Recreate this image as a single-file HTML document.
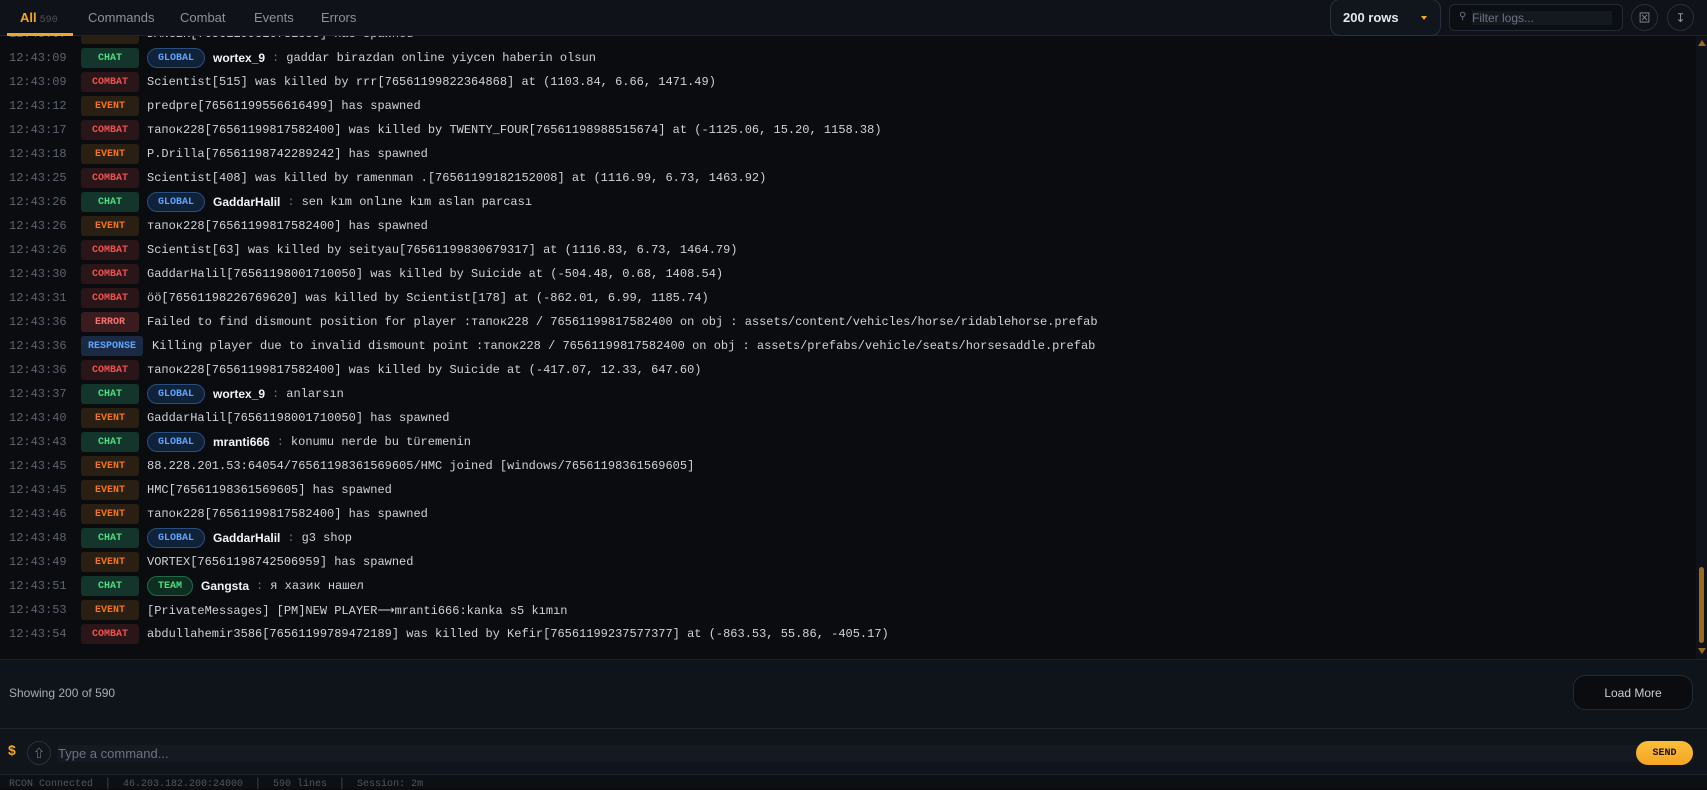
<!DOCTYPE html>
<html><head><meta charset="utf-8"><style>
*{box-sizing:border-box;margin:0;padding:0}
body{width:1707px;height:788px;overflow:hidden;background:#0a0c10;font-family:"Liberation Sans","Noto Sans CJK JP",sans-serif;color:#d1d5db;position:relative}
.tabs{position:absolute;left:0;top:0;width:1707px;height:36px;background:#0f1218;border-bottom:1px solid #1f2530;z-index:2}
.tab{position:absolute;top:10px;font-size:13px;color:#8b929e}
.tab.a{color:#f5a524;font-weight:bold}
.tab.a span{color:#4b4f58;font-family:"Liberation Mono",monospace;font-size:10px;font-weight:normal;margin-left:3px}
.ul{position:absolute;left:7px;top:33px;width:66px;height:3px;background:#f5a524}
.rows{position:absolute;left:1330px;top:-1px;width:111px;height:37px;border:1px solid #2a303b;border-radius:10px;background:#11151c;font-size:13px;font-weight:bold;color:#e5e7eb;padding:10px 0 0 12px}
.rows i{position:absolute;right:13px;top:16px;width:0;height:0;border-left:3px solid transparent;border-right:3px solid transparent;border-top:4px solid #f5a524}
.filt{position:absolute;left:1449px;top:4px;width:174px;height:27px;border:1px solid #232935;border-radius:6px;background:#0b0e13}
.filt .in{position:absolute;left:22px;top:6px;width:140px;height:14px;background:#141920;font-size:12px;color:#6b7280;line-height:14px}
.filt b{position:absolute;left:9px;top:6px;font-size:10px;color:#6b7280;font-weight:normal}
.cb{position:absolute;top:4px;width:27px;height:27px;border:1px solid #2a303b;border-radius:50%;color:#8b929e;font-size:12px;display:flex;align-items:center;justify-content:center}
.log{position:absolute;left:0;top:36px;width:1707px;height:623px;overflow:hidden;background:#0a0c10}
.in2{position:absolute;left:0;top:-14px}
.r{position:absolute;left:0;height:24px;width:1690px;font-family:"Liberation Mono","Noto Sans CJK JP",monospace;font-size:12px;white-space:nowrap}
.t{position:absolute;left:9px;top:5px;color:#5d6470}
.b{position:absolute;left:81px;top:2px;width:58px;height:20px;font-size:10px;font-weight:bold;display:flex;align-items:center;justify-content:center;border-radius:3px;font-family:"Liberation Mono",monospace}
.m{position:absolute;left:147px;top:0;height:24px;display:flex;align-items:center;color:#cfd3d9}
.CHAT{background:#14352b;color:#4ade80}
.COMBAT{background:#2a1519;color:#f05252}
.EVENT{background:#2a1f13;color:#f97316}
.ERROR{background:#3a1c1f;color:#f87171}
.RESPONSE{background:#1a2a44;color:#60a5fa;width:62px}
.pill{display:inline-flex;align-items:center;height:20px;padding:0 10px;border-radius:10px;font-size:10px;font-weight:bold;margin-right:8px}
.g{background:#10213a;border:1px solid #2a4f7c;color:#60a5fa}
.tm{background:#0f2e22;border:1px solid #1f6b45;color:#4ade80}
.nm{font-family:"Liberation Sans",sans-serif;font-weight:bold;color:#f3f4f6;font-size:12px}
.c{color:#6b7280;margin:0 7px}
.sb{position:absolute;left:1696px;top:0;width:11px;height:623px;background:#0f1218}
.th{position:absolute;left:1699px;top:531px;width:5px;height:76px;background:#9a6a1e;border-radius:3px}
.foot{position:absolute;left:0;top:659px;width:1707px;height:69px;background:#0f131a;border-top:1px solid #1c222c}
.foot .s{position:absolute;left:9px;top:26px;font-size:12px;color:#a8adb5}
.lm{position:absolute;left:1573px;top:15px;width:120px;height:35px;border:1px solid #232935;border-radius:12px;background:#0a0c10;font-size:12px;color:#c8ccd2;display:flex;align-items:center;justify-content:center}
.cmd{position:absolute;left:0;top:728px;width:1707px;height:46px;background:#10141b;border-top:1px solid #1f2530}
.dol{position:absolute;left:8px;top:13px;color:#f5a524;font-weight:bold;font-size:14px}
.up{position:absolute;left:27px;top:12px;width:24px;height:24px;border:1px solid #2a303b;border-radius:50%;font-size:11px;color:#9ca3af;display:flex;align-items:center;justify-content:center}
.inp{position:absolute;left:58px;top:16px;width:1580px;height:17px;background:#151a22;font-size:13px;color:#6b7280;line-height:17px}
.send{position:absolute;left:1636px;top:12px;width:57px;height:24px;border-radius:12px;background:linear-gradient(#fbbf3a,#f5a524);color:#1a1206;font-family:"Liberation Mono",monospace;font-weight:bold;font-size:10px;display:flex;align-items:center;justify-content:center}
.st{position:absolute;left:0;top:774px;width:1707px;height:14px;background:#0c0f14;border-top:1px solid #1f2530;font-family:"Liberation Mono",monospace;font-size:10px;color:#4f5560;padding:4px 0 0 9px;white-space:pre}
</style></head><body>
<div class="tabs">
<div class="tab a" style="left:20px">All<span>590</span></div>
<div class="tab" style="left:88px">Commands</div>
<div class="tab" style="left:180px">Combat</div>
<div class="tab" style="left:254px">Events</div>
<div class="tab" style="left:321px">Errors</div>
<div class="ul"></div>
<div class="rows">200 rows<i></i></div>
<div class="filt"><b>⚲</b><div class="in">Filter logs...</div></div>
<div class="cb" style="left:1631px">⊠</div>
<div class="cb" style="left:1667px">↧</div>
</div>
<div class="log"><div class="in2">
<div class="r" style="top:0"><span class="t">12:43:07</span><span class="b EVENT">EVENT</span><span class="m">DANGER[76561199816781885] has spawned</span></div>
<div class="r" style="top:24px"><span class="t">12:43:09</span><span class="b CHAT">CHAT</span><span class="m"><span class="pill g">GLOBAL</span><span class="nm">wortex_9</span><span class="c">:</span>gaddar birazdan online yiycen haberin olsun</span></div>
<div class="r" style="top:48px"><span class="t">12:43:09</span><span class="b COMBAT">COMBAT</span><span class="m">Scientist[515] was killed by rrr[76561199822364868] at (1103.84, 6.66, 1471.49)</span></div>
<div class="r" style="top:72px"><span class="t">12:43:12</span><span class="b EVENT">EVENT</span><span class="m">predpre[76561199556616499] has spawned</span></div>
<div class="r" style="top:96px"><span class="t">12:43:17</span><span class="b COMBAT">COMBAT</span><span class="m">тапок228[76561199817582400] was killed by TWENTY_FOUR[76561198988515674] at (-1125.06, 15.20, 1158.38)</span></div>
<div class="r" style="top:120px"><span class="t">12:43:18</span><span class="b EVENT">EVENT</span><span class="m">P.Drilla[76561198742289242] has spawned</span></div>
<div class="r" style="top:144px"><span class="t">12:43:25</span><span class="b COMBAT">COMBAT</span><span class="m">Scientist[408] was killed by ramenman .[76561199182152008] at (1116.99, 6.73, 1463.92)</span></div>
<div class="r" style="top:168px"><span class="t">12:43:26</span><span class="b CHAT">CHAT</span><span class="m"><span class="pill g">GLOBAL</span><span class="nm">GaddarHalil</span><span class="c">:</span>sen kım onlıne kım aslan parcası</span></div>
<div class="r" style="top:192px"><span class="t">12:43:26</span><span class="b EVENT">EVENT</span><span class="m">тапок228[76561199817582400] has spawned</span></div>
<div class="r" style="top:216px"><span class="t">12:43:26</span><span class="b COMBAT">COMBAT</span><span class="m">Scientist[63] was killed by seityau[76561199830679317] at (1116.83, 6.73, 1464.79)</span></div>
<div class="r" style="top:240px"><span class="t">12:43:30</span><span class="b COMBAT">COMBAT</span><span class="m">GaddarHalil[76561198001710050] was killed by Suicide at (-504.48, 0.68, 1408.54)</span></div>
<div class="r" style="top:264px"><span class="t">12:43:31</span><span class="b COMBAT">COMBAT</span><span class="m">öö[76561198226769620] was killed by Scientist[178] at (-862.01, 6.99, 1185.74)</span></div>
<div class="r" style="top:288px"><span class="t">12:43:36</span><span class="b ERROR">ERROR</span><span class="m">Failed to find dismount position for player :тапок228 / 76561199817582400 on obj : assets/content/vehicles/horse/ridablehorse.prefab</span></div>
<div class="r" style="top:312px"><span class="t">12:43:36</span><span class="b RESPONSE">RESPONSE</span><span class="m" style="left:152px">Killing player due to invalid dismount point :тапок228 / 76561199817582400 on obj : assets/prefabs/vehicle/seats/horsesaddle.prefab</span></div>
<div class="r" style="top:336px"><span class="t">12:43:36</span><span class="b COMBAT">COMBAT</span><span class="m">тапок228[76561199817582400] was killed by Suicide at (-417.07, 12.33, 647.60)</span></div>
<div class="r" style="top:360px"><span class="t">12:43:37</span><span class="b CHAT">CHAT</span><span class="m"><span class="pill g">GLOBAL</span><span class="nm">wortex_9</span><span class="c">:</span>anlarsın</span></div>
<div class="r" style="top:384px"><span class="t">12:43:40</span><span class="b EVENT">EVENT</span><span class="m">GaddarHalil[76561198001710050] has spawned</span></div>
<div class="r" style="top:408px"><span class="t">12:43:43</span><span class="b CHAT">CHAT</span><span class="m"><span class="pill g">GLOBAL</span><span class="nm">mranti666</span><span class="c">:</span>konumu nerde bu türemenin</span></div>
<div class="r" style="top:432px"><span class="t">12:43:45</span><span class="b EVENT">EVENT</span><span class="m">88.228.201.53:64054/76561198361569605/HMC joined [windows/76561198361569605]</span></div>
<div class="r" style="top:456px"><span class="t">12:43:45</span><span class="b EVENT">EVENT</span><span class="m">HMC[76561198361569605] has spawned</span></div>
<div class="r" style="top:480px"><span class="t">12:43:46</span><span class="b EVENT">EVENT</span><span class="m">тапок228[76561199817582400] has spawned</span></div>
<div class="r" style="top:504px"><span class="t">12:43:48</span><span class="b CHAT">CHAT</span><span class="m"><span class="pill g">GLOBAL</span><span class="nm">GaddarHalil</span><span class="c">:</span>g3 shop</span></div>
<div class="r" style="top:528px"><span class="t">12:43:49</span><span class="b EVENT">EVENT</span><span class="m">VORTEX[76561198742506959] has spawned</span></div>
<div class="r" style="top:552px"><span class="t">12:43:51</span><span class="b CHAT">CHAT</span><span class="m"><span class="pill tm">TEAM</span><span class="nm">Gangsta</span><span class="c">:</span>я хазик нашел</span></div>
<div class="r" style="top:576px"><span class="t">12:43:53</span><span class="b EVENT">EVENT</span><span class="m">[PrivateMessages] [PM]NEW PLAYER⟶mranti666:kanka s5 kımın</span></div>
<div class="r" style="top:600px"><span class="t">12:43:54</span><span class="b COMBAT">COMBAT</span><span class="m">abdullahemir3586[76561199789472189] was killed by Kefir[76561199237577377] at (-863.53, 55.86, -405.17)</span></div>
</div>
<div class="sb"></div>
<div style="position:absolute;left:1698px;top:4px;width:0;height:0;border-left:4px solid transparent;border-right:4px solid transparent;border-bottom:6px solid #9a6a1e"></div>
<div class="th"></div>
<div style="position:absolute;left:1698px;top:612px;width:0;height:0;border-left:4px solid transparent;border-right:4px solid transparent;border-top:6px solid #9a6a1e"></div>
</div>
<div class="foot"><div class="s">Showing 200 of 590</div><div class="lm">Load More</div></div>
<div class="cmd"><div class="dol">$</div><div class="up">⇧</div><div class="inp">Type a command...</div><div class="send">SEND</div></div>
<div class="st">RCON Connected  │  46.203.182.200:24000  │  590 lines  │  Session: 2m</div>
</body></html>
